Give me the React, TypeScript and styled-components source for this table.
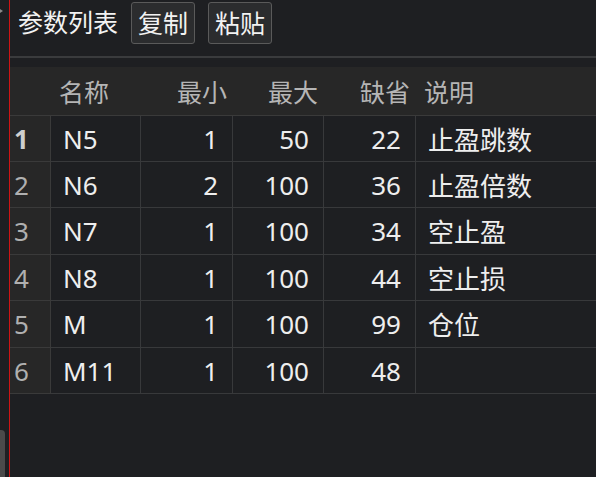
import React from 'react';
import styled, { createGlobalStyle } from 'styled-components';

const GlobalStyle = createGlobalStyle`
  html, body {
    margin: 0;
    padding: 0;
    background: #1e1f22;
    overflow: hidden;
  }
  body {
    font-family: "Noto Sans", "Noto Sans CJK SC", sans-serif;
  }
`;

const Shell = styled.div`
  display: flex;
  width: 596px;
  height: 477px;
  background: #1e1f22;
`;

const Gutter = styled.div`
  width: 9px;
  display: flex;
  flex-direction: column;
  justify-content: space-between;
  background: #1e1f22;
`;

const Caret = styled.div`
  margin-top: 9px;
  width: 0;
  height: 0;
  border-top: 2px solid transparent;
  border-bottom: 2px solid transparent;
  border-left: 3px solid #8a8a8a;
`;

const Thumb = styled.div`
  width: 5px;
  height: 47px;
  background: #4a4a4a;
  border-top-right-radius: 4px;
`;

const Main = styled.div`
  flex: 1;
  display: flex;
  flex-direction: column;
  border-left: 1px solid #d01414;
  min-width: 0;
`;

const Toolbar = styled.div`
  display: flex;
  align-items: center;
  gap: 12px;
  height: 58px;
  padding: 3px 0 13px 8px;
  box-sizing: border-box;
  border-bottom: 2px solid #3a3b3d;
`;

const Title = styled.span`
  color: #f2f2f2;
  font-size: 25px;
  line-height: 1;
  margin-top: -2px;
`;

const ToolButton = styled.button`
  height: 42px;
  padding: 0 6px;
  margin-left: 1px;
  background: #2b2c2e;
  border: 1px solid #5a5a5a;
  border-radius: 3px;
  color: #f2f2f2;
  font-family: inherit;
  font-size: 25px;
  line-height: 1;
  cursor: pointer;
`;

const Grid = styled.div`
  margin-top: 9px;
  display: grid;
  grid-template-columns: 41px 90px 92px 91px 92px 1fr;
  grid-template-rows: 49px 46px 46px 47px 46px 47px 46px;
`;

const HeadCell = styled.div<{ $align: 'left' | 'right' }>`
  background: #272727;
  border-bottom: 1px solid #3a3a3a;
  display: flex;
  align-items: center;
  justify-content: ${p => (p.$align === 'right' ? 'flex-end' : 'flex-start')};
  padding: 0 ${p => (p.$align === 'right' ? '6px' : '0')} 0 ${p => (p.$align === 'left' ? '8px' : '0')};
  color: #b5b5b5;
  font-size: 25px;
  white-space: nowrap;
`;

const RowNum = styled.div<{ $active: boolean }>`
  background: #272727;
  border-right: 1px solid #3a3a3a;
  border-bottom: 1px solid #3a3a3a;
  display: flex;
  align-items: center;
  padding-left: 4px;
  color: ${p => (p.$active ? '#cfcfcf' : '#b0b0b0')};
  font-weight: ${p => (p.$active ? 700 : 400)};
  font-size: 26px;
`;

const Cell = styled.div<{ $align: 'left' | 'right'; $last?: boolean }>`
  border-right: ${p => (p.$last ? 'none' : '1px solid #38393b')};
  border-bottom: 1px solid #38393b;
  display: flex;
  align-items: center;
  justify-content: ${p => (p.$align === 'right' ? 'flex-end' : 'flex-start')};
  padding: ${p => (p.$align === 'right' ? '0 14px 0 0' : '0 0 0 12px')};
  color: #eeeeee;
  font-size: 26px;
  white-space: nowrap;
  overflow: hidden;
`;

const headers: { label: string; align: 'left' | 'right' }[] = [
  { label: '', align: 'left' },
  { label: '名称', align: 'left' },
  { label: '最小', align: 'right' },
  { label: '最大', align: 'right' },
  { label: '缺省', align: 'right' },
  { label: '说明', align: 'left' },
];

const rows = [
  { name: 'N5', min: 1, max: 50, def: 22, desc: '止盈跳数' },
  { name: 'N6', min: 2, max: 100, def: 36, desc: '止盈倍数' },
  { name: 'N7', min: 1, max: 100, def: 34, desc: '空止盈' },
  { name: 'N8', min: 1, max: 100, def: 44, desc: '空止损' },
  { name: 'M', min: 1, max: 100, def: 99, desc: '仓位' },
  { name: 'M11', min: 1, max: 100, def: 48, desc: '' },
];

export default function App() {
  return (
    <>
      <GlobalStyle />
      <Shell>
        <Gutter>
          <Caret />
          <Thumb />
        </Gutter>
        <Main>
          <Toolbar>
            <Title>参数列表</Title>
            <ToolButton>复制</ToolButton>
            <ToolButton>粘贴</ToolButton>
          </Toolbar>
          <Grid>
            {headers.map((h, i) => (
              <HeadCell key={i} $align={h.align}>{h.label}</HeadCell>
            ))}
            {rows.map((r, i) => (
              <React.Fragment key={r.name}>
                <RowNum $active={i === 0}>{i + 1}</RowNum>
                <Cell $align="left">{r.name}</Cell>
                <Cell $align="right">{r.min}</Cell>
                <Cell $align="right">{r.max}</Cell>
                <Cell $align="right">{r.def}</Cell>
                <Cell $align="left" $last>{r.desc}</Cell>
              </React.Fragment>
            ))}
          </Grid>
        </Main>
      </Shell>
    </>
  );
}
